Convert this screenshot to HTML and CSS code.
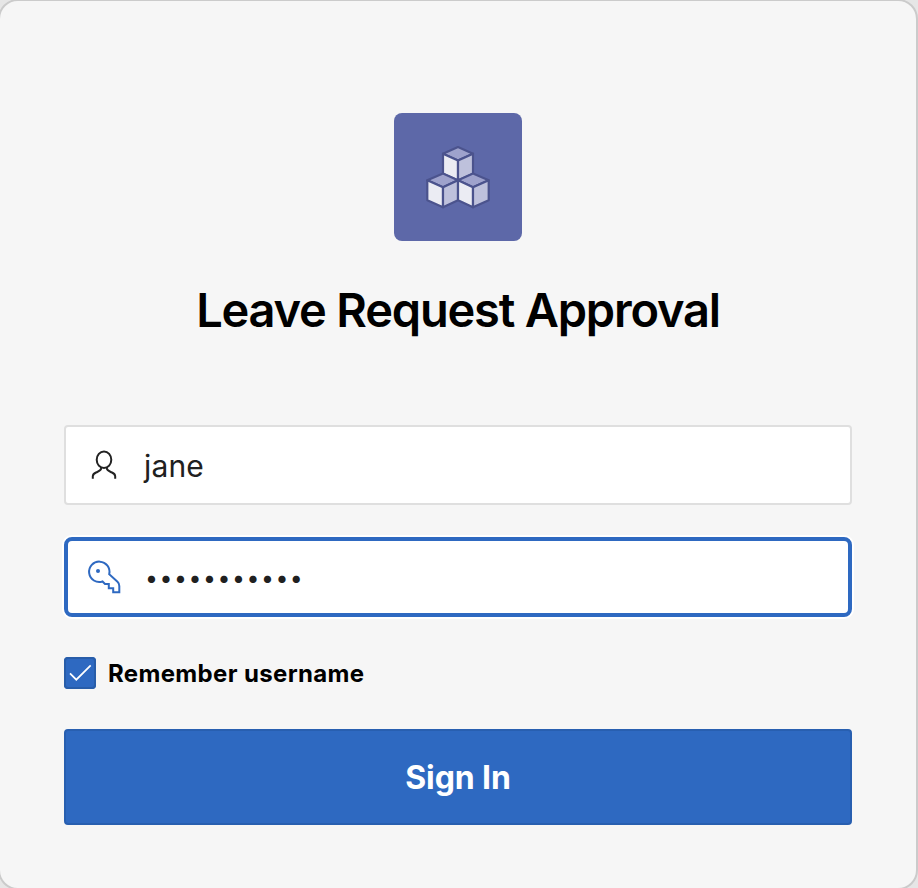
FILE: index.html
```html
<!DOCTYPE html>
<html lang="en">
<head>
<meta charset="utf-8">
<title>Leave Request Approval</title>
<link rel="stylesheet" href="styles.css">
</head>
<body>
<main class="card">
  <svg class="logo" viewBox="0 0 128 128" aria-hidden="true">
    <g stroke="#4b538d" stroke-width="2.200" stroke-linejoin="round">
      <path fill="#9ea2cc" d="M64 34l15 6.700-15 6.800-15-6.800z"/>
      <path fill="#ebecf3" d="M49 40.700l15 6.800v20l-15-6.800z"/>
      <path fill="#bec1dc" d="M79 40.700l-15 6.800v20l15-6.800z"/>
      <path fill="#9ea2cc" d="M49 60.500l15 6.800-15 7-15.700-7z"/>
      <path fill="#ebecf3" d="M33.300 67.300l15.700 7v20l-15.700-7z"/>
      <path fill="#bec1dc" d="M64 67.300l-15 7v20l15-7z"/>
      <path fill="#9ea2cc" d="M79 60.500l15.700 6.800-15.700 7-15-7z"/>
      <path fill="#ebecf3" d="M64 67.300l15 7v20l-15-7z"/>
      <path fill="#bec1dc" d="M94.700 67.300l-15.700 7v20l15.700-7z"/>
    </g>
  </svg>
  <h1 class="title">Leave Request Approval</h1>
  <form class="form">
    <label class="field">
      <svg class="field-icon" viewBox="0 0 36 36" aria-hidden="true">
        <ellipse cx="18" cy="12.800" rx="7.300" ry="8.300"/>
        <path d="M15.200 20.300v1c0 2.200-2.200 2.900-4.700 4-2.500 1-3.700 2-3.700 4V31.700M20.800 20.300v1c0 2.200 2.200 2.900 4.700 4 2.500 1 3.700 2 3.700 4V31.700"/>
      </svg>
      <span class="input">jane</span>
    </label>
    <label class="field focused">
      <svg class="field-icon" viewBox="0 0 36 36" aria-hidden="true">
        <path d="M16.500 22.500A10.200 10.200 0 1 1 23.200 15.200L31.500 22.800Q33.300 24.500 33.300 27V33.200H27.200V29.200H22.800V25H19z"/>
        <circle class="dot" cx="12" cy="12" r="2"/>
      </svg>
      <span class="input secret">•••••••••••</span>
    </label>
    <div class="remember">
      <span class="checkbox"><svg viewBox="0 0 32 32" aria-hidden="true"><path d="M6 16.300l6.300 6.400L26.700 8.300"/></svg></span>
      <span class="remember-text">Remember username</span>
    </div>
    <button class="submit" type="button">Sign In</button>
  </form>
</main>
</body>
</html>
```
FILE: styles.css
```css
* { box-sizing: border-box; }
html { height: 100%; overflow: hidden; }
body {
  margin: 0;
  height: 100%;
  overflow: hidden;
  background: #e6e6e6;
  font-family: Inter, "Liberation Sans", sans-serif;
}
.card {
  width: 920px;
  height: 891px;
  margin: -1px 0 0 -2px;
  padding: 112px 64px 0;
  border: 2px solid #cbcbcb;
  border-radius: 20px;
  background: #f6f6f6;
  display: flex;
  flex-direction: column;
  align-items: center;
}
.logo {
  width: 128px;
  height: 128px;
  flex: none;
  border-radius: 8px;
  background: #5d68a8;
}
.title {
  margin: 39px 0 85px;
  font-size: 47px;
  line-height: 60px;
  font-weight: 600;
  letter-spacing: -1.2px;
  color: #000;
  white-space: nowrap;
}
.form {
  width: 788px;
  display: flex;
  flex-direction: column;
}
.field {
  height: 80px;
  margin-bottom: 32px;
  padding-left: 20px;
  display: flex;
  align-items: center;
  border: 2px solid #dfdfdf;
  border-radius: 4px;
  background: #fff;
}
.focused {
  padding-left: 18px;
  border: 4px solid #2e69c1;
  border-radius: 8px;
  box-shadow: 0 0 0 2px #fff;
}
.field-icon {
  width: 36px;
  height: 36px;
  flex: none;
  fill: none;
  stroke: #222;
  stroke-width: 2;
}
.focused .field-icon { stroke: #2e69c1; }
.focused .dot { fill: #2e69c1; stroke: none; }
.input {
  flex: 1;
  min-width: 0;
  margin-left: 22px;
  padding-top: 2px;
  font: 400 30px/40px Inter, "Liberation Sans", sans-serif;
  letter-spacing: 0.15px;
  color: #202020;
}
.secret {
  margin-left: 23px;
  font-size: 23px;
  letter-spacing: 1.55px;
}
.remember {
  height: 32px;
  margin: 8px 0 40px;
  display: flex;
  align-items: center;
  gap: 12px;
}
.checkbox {
  width: 32px;
  height: 32px;
  border-radius: 4px;
  background: #2e69c1;
  box-shadow: inset 0 0 0 2px #285da9;
}
.checkbox svg {
  display: block;
  fill: none;
  stroke: #fff;
  stroke-width: 1.7;
}
.remember-text {
  padding-top: 2px;
  font-size: 24px;
  line-height: 32px;
  font-weight: 700;
  letter-spacing: 0.35px;
  color: #000;
}
.submit {
  height: 96px;
  padding: 2px 0 0;
  border: 2px solid #285fb0;
  border-radius: 4px;
  background: #2e69c1;
  color: #fff;
  font: 700 32px/40px Inter, "Liberation Sans", sans-serif;
  letter-spacing: -0.1px;
}
```
